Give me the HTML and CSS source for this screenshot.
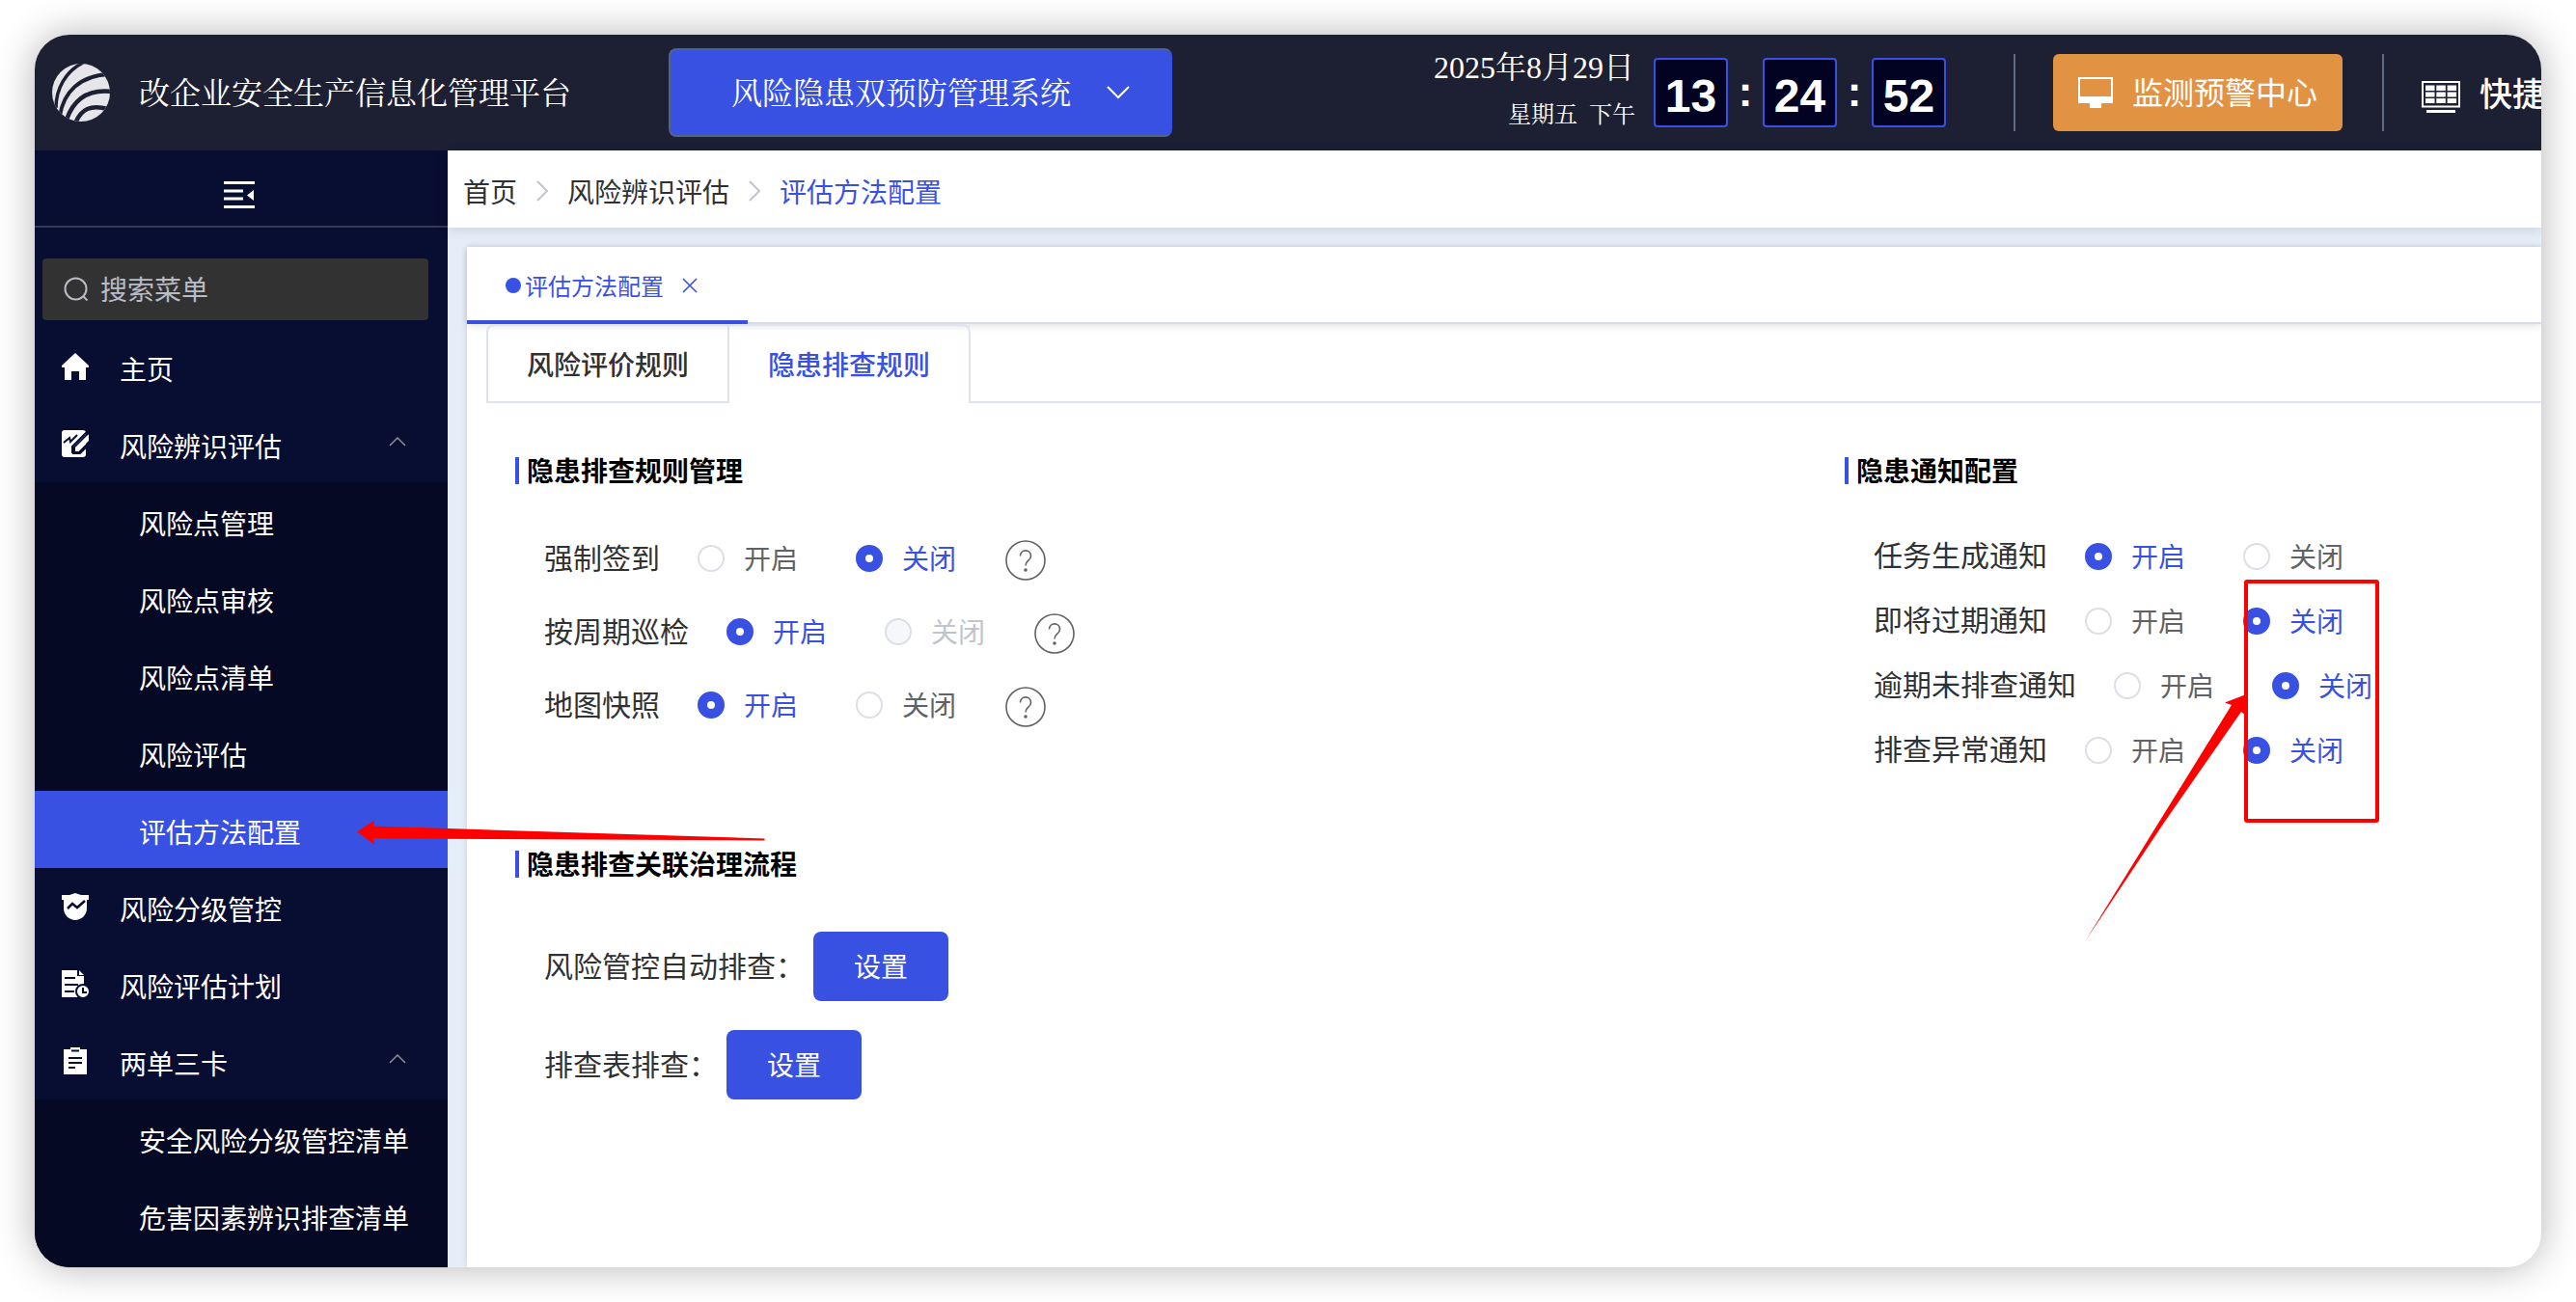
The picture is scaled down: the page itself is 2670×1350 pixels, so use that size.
FILE: index.html
```html
<!DOCTYPE html>
<html lang="zh-CN">
<head>
<meta charset="utf-8">
<title>评估方法配置</title>
<link rel="stylesheet" href="styles.css">
</head>
<body>
<div class="window">
  <header class="header">
    <svg class="logo" viewBox="0 0 60 60">
      <defs><clipPath id="disc"><circle cx="30" cy="30" r="30"/></clipPath></defs>
      <g clip-path="url(#disc)">
        <rect width="60" height="60" fill="#e6e6ea"/>
        <g fill="none" stroke="#1d1f33">
          <path d="M4 46C4 26 14 8 32 -1" stroke-width="3.500"/>
          <path d="M8 54C12 30 28 12 60 11" stroke-width="4"/>
          <path d="M15 58C22 38 36 26 62 29" stroke-width="4.500"/>
          <path d="M24 62C30 47 40 42 58 47" stroke-width="4.500"/>
        </g>
      </g>
    </svg>
    <h1 class="title">改企业安全生产信息化管理平台</h1>
    <button class="system"><span>风险隐患双预防管理系统</span>
      <svg width="24" height="14" viewBox="0 0 24 14"><path d="M1 1l11 11L23 1" fill="none" stroke="#fff" stroke-width="2"/></svg>
    </button>
    <div class="date"><div class="day">2025年8月29日</div><div class="week">星期五&nbsp; 下午</div></div>
    <div class="clock"><b class="digit">13</b><b class="colon">:</b><b class="digit">24</b><b class="colon">:</b><b class="digit">52</b></div>
    <i class="divider"></i>
    <button class="monitor">
      <svg width="36" height="32" viewBox="0 0 36 32"><path fill="#fff" fill-rule="evenodd" d="M0 0h36v26q0 1-1 1H24v5H12v-5H1q-1 0-1-1zM2 2v18h32V2z"/></svg>
      <span>监测预警中心</span>
    </button>
    <i class="divider"></i>
    <div class="quick">
      <svg width="40" height="33" viewBox="0 0 40 33"><rect x="1" y="1" width="38" height="25.500" fill="none" stroke="#fff" stroke-width="2"/><path fill="#fff" d="M4 4.500h9.500v5.500H4zM15.300 4.500h9.500v5.500h-9.500zM26.600 4.500h9.500v5.500h-9.500zM4 11.500h9.500v5H4zM15.300 11.500h9.500v5h-9.500zM26.600 11.500h9.500v5h-9.500zM4 18h9.500v5H4zM15.300 18h9.500v5h-9.500zM26.600 18h9.500v5h-9.500zM5 30h30v3H5z"/></svg>
      <span>快捷</span>
    </div>
  </header>
  <div class="body">
    <aside class="sidebar">
      <div class="fold"><svg width="32" height="28" viewBox="0 0 32 28"><path fill="#fff" d="M0 0h32v3H0zM0 8.500h20v3H0zM0 16.500h20v3H0zM0 25h32v3H0zM31 9v11l-7-5.500z"/></svg></div>
      <div class="search"><svg width="26" height="26" viewBox="0 0 26 26" fill="none" stroke="#b9bcc4" stroke-width="2"><circle cx="12.500" cy="12.500" r="11"/><path d="M20 20l4.500 4.500"/></svg><span>搜索菜单</span></div>
      <nav class="menu">
        <div class="item"><svg class="ico" viewBox="0 0 28 28"><path fill="#fff" d="M14 0l14 13v2h-3v13h-7v-9h-8v9H3V15H0v-2z"/></svg><span>主页</span></div>
        <div class="item"><svg class="ico" viewBox="0 0 28 28"><rect width="25" height="28" rx="3" fill="#fff"/><path d="M2 13l6-5 1 4 7-7M27 4L13 18v5h5L29 12" fill="none" stroke="#080d32" stroke-width="2"/><path d="M27.500 4.500L14 18v4h3L28 11V5z" fill="#fff"/><path d="M11 24V17L26 2M11 24h8l7-7" fill="none" stroke="#080d32" stroke-width="2"/></svg><span>风险辨识评估</span><svg class="caret" viewBox="0 0 18 10"><path d="M1 9l8-8 8 8"/></svg></div>
        <div class="sub">
          <div class="item">风险点管理</div>
          <div class="item">风险点审核</div>
          <div class="item">风险点清单</div>
          <div class="item">风险评估</div>
          <div class="item active">评估方法配置</div>
        </div>
        <div class="item"><svg class="ico" viewBox="0 0 28 28"><path fill="#fff" d="M14 0l6 2h8v5h-2v9c0 7-6 12-12 12S2 23 2 16V7H0V2h8z"/><path d="M6 16l5-5 5 4 8-7" fill="none" stroke="#080d32" stroke-width="2.500"/></svg><span>风险分级管控</span></div>
        <div class="item"><svg class="ico" viewBox="0 0 28 28"><path fill="#fff" d="M0 0h16v6h7v22H0zM18 0l5 5h-5z"/><path d="M3 8h11M3 15h14M3 22h10" stroke="#080d32" stroke-width="2"/><circle cx="22" cy="22" r="7" fill="#fff" stroke="#080d32" stroke-width="2"/><path d="M22 18v5h4" fill="none" stroke="#080d32" stroke-width="2"/></svg><span>风险评估计划</span></div>
        <div class="item"><svg class="ico" viewBox="0 0 28 28"><path fill="#fff" d="M2 2h7V0h10v2h7v26H2z"/><path d="M10 3.500h8M7 11h14M7 16h14M7 21h7" stroke="#080d32" stroke-width="2"/></svg><span>两单三卡</span><svg class="caret" viewBox="0 0 18 10"><path d="M1 9l8-8 8 8"/></svg></div>
        <div class="sub last">
          <div class="item">安全风险分级管控清单</div>
          <div class="item">危害因素辨识排查清单</div>
        </div>
      </nav>
    </aside>
    <main class="main">
      <div class="crumbs"><span>首页</span><svg viewBox="0 0 52 24"><path d="M21 2l10 10-10 10"/></svg><span>风险辨识评估</span><svg viewBox="0 0 52 24"><path d="M21 2l10 10-10 10"/></svg><span class="on">评估方法配置</span></div>
      <section class="card">
        <div class="pages"><div class="page"><i class="dot"></i><span>评估方法配置</span><svg width="16" height="16" viewBox="0 0 16 16"><path d="M1 1l14 14M15 1L1 15" stroke="#3851e3" stroke-width="1.600"/></svg></div></div>
        <div class="tabs"><div class="tab">风险评价规则</div><div class="tab on">隐患排查规则</div><div class="rest"></div></div>
        <div class="content">
          <div class="left">
            <h2>隐患排查规则管理</h2>
            <div class="rows">
              <div class="row"><label>强制签到</label><i class="radio"></i><span>开启</span><i class="radio on"></i><span>关闭</span><svg class="help" viewBox="0 0 42 42"><circle cx="21" cy="21" r="20"/><path d="M15.500 16.500c0-7.500 11-7.500 11 0 0 5-5.500 4.500-5.500 10"/><circle class="pt" cx="21" cy="31" r="1"/></svg></div>
              <div class="row"><label>按周期巡检</label><i class="radio on"></i><span>开启</span><i class="radio off"></i><span>关闭</span><svg class="help" viewBox="0 0 42 42"><circle cx="21" cy="21" r="20"/><path d="M15.500 16.500c0-7.500 11-7.500 11 0 0 5-5.500 4.500-5.500 10"/><circle class="pt" cx="21" cy="31" r="1"/></svg></div>
              <div class="row"><label>地图快照</label><i class="radio on"></i><span>开启</span><i class="radio"></i><span>关闭</span><svg class="help" viewBox="0 0 42 42"><circle cx="21" cy="21" r="20"/><path d="M15.500 16.500c0-7.500 11-7.500 11 0 0 5-5.500 4.500-5.500 10"/><circle class="pt" cx="21" cy="31" r="1"/></svg></div>
            </div>
            <h2>隐患排查关联治理流程</h2>
            <div class="flows">
              <div class="flow"><label>风险管控自动排查：</label><button>设置</button></div>
              <div class="flow"><label>排查表排查：</label><button>设置</button></div>
            </div>
          </div>
          <div class="right">
            <h2>隐患通知配置</h2>
            <div class="rows">
              <div class="row"><label>任务生成通知</label><i class="radio on"></i><span>开启</span><i class="radio"></i><span>关闭</span></div>
              <div class="row"><label>即将过期通知</label><i class="radio"></i><span>开启</span><i class="radio on"></i><span>关闭</span></div>
              <div class="row"><label>逾期未排查通知</label><i class="radio"></i><span>开启</span><i class="radio on"></i><span>关闭</span></div>
              <div class="row"><label>排查异常通知</label><i class="radio"></i><span>开启</span><i class="radio on"></i><span>关闭</span></div>
            </div>
          </div>
        </div>
      </section>
    </main>
  </div>
</div>
<svg class="marks" viewBox="0 0 2670 1350">
  <path fill="#f00" d="M370 862.500L388 850.500 387 856.500 792.500 869.500V871.500L387 869.500 388 875.500z"/>
  <path fill="#f00" d="M2161.500 975.500L2313 731 2306 728.500 2328 720V742L2323 738 2243 853z"/>
  <rect x="2328" y="603" width="136" height="248" rx="1" fill="none" stroke="#f00" stroke-width="4"/>
</svg>
</body>
</html>
```
FILE: styles.css
```css
* { box-sizing: border-box; margin: 0; padding: 0; }
body { width: 2670px; height: 1350px; padding: 36px; overflow: hidden; background: #fff; font: 28px/40px "Noto Sans CJK SC", sans-serif; color: #303133; }
i { font-style: normal; flex: none; }
svg { flex: none; display: block; }
button { border: 0; font: inherit; color: #fff; flex: none; }
h1, h2 { font-size: inherit; }
.window { width: 2598px; height: 1278px; border-radius: 36px; overflow: hidden; box-shadow: 0 0 40px rgba(0, 0, 0, .3); }

.header { height: 120px; display: flex; align-items: center; padding-left: 18px; background: #1d1f33; color: #fff; white-space: nowrap; }
.header > * { flex: none; }
.logo { width: 60px; height: 60px; }
.title { width: 547px; margin-left: 30px; padding-top: 2px; font: 400 32px/48px "Liberation Serif", "Noto Serif CJK SC", "Noto Sans CJK SC", serif; }
.system { width: 522px; height: 92px; margin-left: 2px; display: flex; align-items: center; padding-left: 63px; border: 2px solid #536387; border-right-color: #3851e3; border-radius: 8px; background: #3851e3; font: 32px/48px "Liberation Serif", "Noto Serif CJK SC", "Noto Sans CJK SC", serif; }
.system span { padding-top: 1px; }
.system svg { margin-left: 37px; }
.date { width: 480px; height: 120px; padding-top: 10px; text-align: right; font-family: "Liberation Serif", "Noto Serif CJK SC", "Noto Sans CJK SC", serif; }
.day { font-size: 32px; line-height: 48px; padding-right: 1px; }
.week { font-size: 24px; line-height: 36px; margin-top: 7px; }
.clock { display: flex; margin-left: 19px; font-family: "Liberation Sans", sans-serif; }
.digit { width: 77px; height: 72px; border: 2px solid #3851e3; border-radius: 4px; background: #020322; font-size: 48px; line-height: 75px; text-align: center; }
.colon { width: 36px; text-align: center; font-size: 44px; line-height: 70px; }
.divider { width: 2px; height: 80px; margin-left: 70px; background: #5f6b85; }
.monitor { width: 300px; height: 80px; margin: 0 -29px 0 39px; padding-left: 26px; display: flex; align-items: center; border-radius: 6px; background: #e29243; font-size: 32px; }
.monitor span { margin: -4px 0 0 20px; }
.quick { display: flex; align-items: center; margin-left: 39px; padding-top: 8px; }
.quick span { margin: -8px 0 0 20px; font-size: 34px; font-weight: 500; }

.body { height: 1158px; display: flex; }
.sidebar { width: 428px; flex: none; background: #080d32; color: #fff; }
.fold { height: 80px; padding: 32px 0 0 196px; border-bottom: 2px solid #343959; }
.search { width: 400px; height: 64px; margin: 32px 8px 8px; padding-left: 22px; display: flex; align-items: center; gap: 12px; border-radius: 4px; background: #323232; color: #b9bcc4; }
.search span { margin-top: -2px; }
.item { height: 80px; display: flex; align-items: center; padding-left: 28px; }
.item span { margin: 4px 0 0 32px; }
.ico { width: 28px; height: 28px; }
.caret { width: 18px; height: 10px; margin: -4px 43px 0 auto; fill: none; stroke: #8b8f9c; stroke-width: 1.5; }
.sub { background: #060924; }
.sub.last { height: 174px; }
.sub .item { padding: 4px 0 0 108px; }
.sub .active { background: #3851e3; }

.main { flex: 1; min-width: 0; background: #e5edf8; }
.crumbs { height: 80px; display: flex; align-items: center; padding: 4px 0 0 16px; background: #fff; box-shadow: 0 2px 12px rgba(0, 0, 0, .12); }
.crumbs svg { width: 52px; height: 24px; fill: none; stroke: #c0c4cc; stroke-width: 2; }
.on { color: #3851e3; }
.card { height: 1058px; margin: 20px 0 0 20px; background: #fff; box-shadow: 0 0 6px rgba(0, 0, 0, .12); }
.pages { height: 80px; border-bottom: 2px solid #d8dce8; box-shadow: 0 2px 8px rgba(0, 0, 0, .12); }
.page { width: 291px; height: 80px; display: flex; align-items: center; padding: 4px 0 0 40px; border-bottom: 4px solid #3851e3; font-size: 24px; color: #3851e3; }
.dot { width: 16px; height: 16px; margin-right: 4px; border-radius: 50%; background: #3851e3; }
.page svg { margin-left: 19px; }
.tabs { height: 82px; display: flex; padding-left: 20px; font-weight: 500; }
.tab { width: 250px; padding-top: 19px; text-align: center; border: 2px solid #dfe3ef; border-width: 2px 0 2px 2px; border-radius: 8px 0 0 0; }
.tab.on { width: 252px; border-width: 2px 2px 0 2px; border-radius: 0 8px 0 0; }
.rest { flex: 1; border-bottom: 2px solid #dfe3ef; }
.content { display: flex; padding: 56px 0 0 50px; }
.left { width: 1378px; }
h2 { height: 28px; padding-left: 8px; border-left: 4px solid #3851e3; font-weight: 700; line-height: 26px; color: #000; }
.rows { padding: 39px 0 0 30px; }
.row { height: 76px; display: flex; align-items: center; }
.row label, .flow label { margin-top: -5px; font-size: 30px; }
.row label { margin-right: 39px; }
.row span { margin: -2px 0 0 20px; color: #606266; }
.row span + .radio { margin-left: 60px; }
.radio { width: 28px; height: 28px; border: 2px solid #dcdfe6; border-radius: 50%; background: #fff; }
.radio.on { border: 10px solid #3851e3; }
.row .radio.on + span { color: #3851e3; }
.radio.off { background: #f5f7fa; }
.row .radio.off + span { color: #c0c4cc; }
.help { width: 42px; height: 42px; margin: 4px 0 0 51px; fill: none; stroke: #606266; stroke-width: 1.6; }
.pt { fill: #606266; }
.left .rows { height: 380px; }
.right .rows { padding-top: 41px; }
.right .row { height: 67px; }
.flows { padding: 56px 0 0 30px; }
.flow { display: flex; align-items: center; gap: 9px; margin-bottom: 30px; }
.flow button { width: 140px; height: 72px; padding-bottom: 2px; border-radius: 8px; background: #3851e3; }
.marks { position: absolute; left: 0; top: 0; width: 2670px; height: 1350px; }
```
